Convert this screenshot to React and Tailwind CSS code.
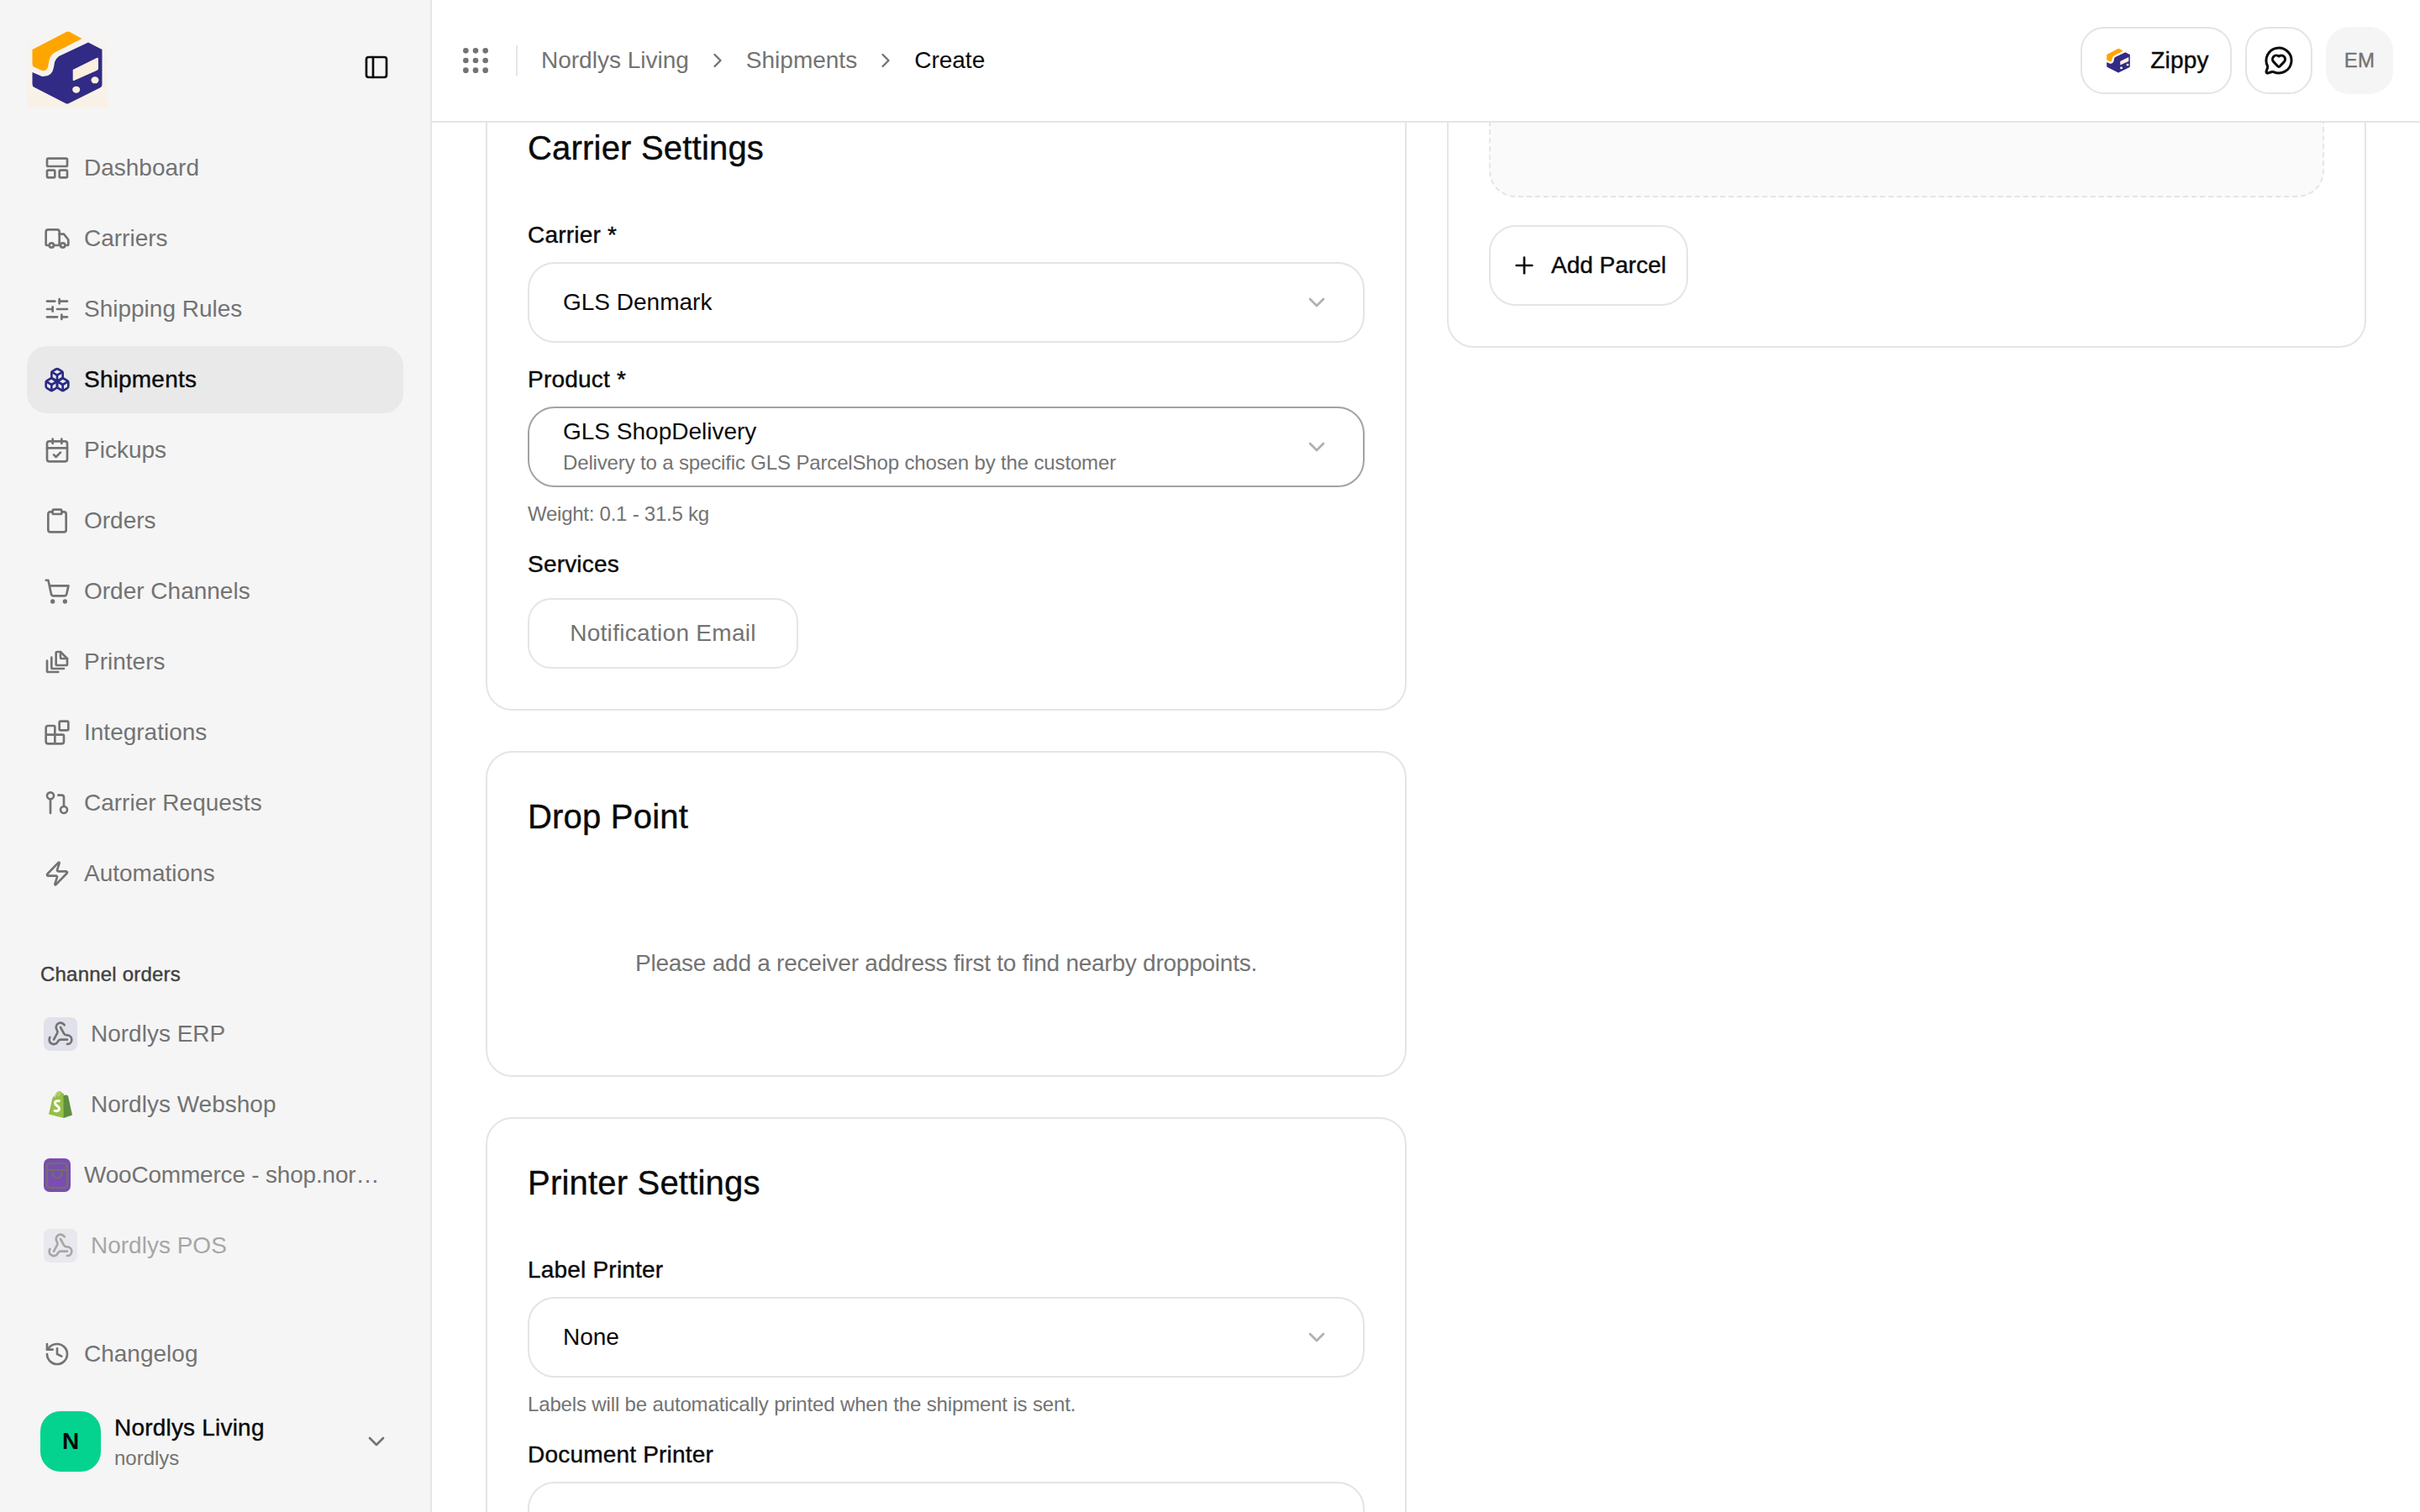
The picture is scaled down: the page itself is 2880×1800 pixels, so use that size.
import {
  Blocks,
  Boxes,
  CalendarCheck,
  ChevronDown,
  ChevronRight,
  Clipboard,
  Grip,
  History,
  MessageCircleHeart,
  PanelLeft,
  Plus,
  ShoppingCart,
  SlidersHorizontal,
  Truck,
  Webhook,
  Zap,
} from 'lucide-react'

const medium = '[-webkit-text-stroke:0.4px] tracking-[0.2px]'

const DashboardIcon = ({ className }) => (
  <svg className={className} viewBox="0 0 24 24" fill="none" stroke="currentColor" strokeWidth="2" strokeLinejoin="round">
    <rect x="3" y="3.5" width="18" height="7" rx="1" />
    <rect x="3" y="14" width="7" height="6.5" rx="1" />
    <rect x="14" y="14" width="7" height="6.5" rx="1" />
  </svg>
)

const PagesIcon = ({ className }) => (
  <svg className={className} viewBox="0 0 24 24" fill="none" stroke="currentColor" strokeWidth="2" strokeLinecap="round" strokeLinejoin="round">
    <path d="M15 3h-3a1 1 0 0 0-1 1v10a1 1 0 0 0 1 1h8a1 1 0 0 0 1-1V9z" />
    <path d="M15 3v5a1 1 0 0 0 1 1h5" />
    <path d="M7 8v9a1 1 0 0 0 1 1h10" />
    <path d="M3 11v9a1 1 0 0 0 1 1h9" />
  </svg>
)

const RequestIcon = ({ className }) => (
  <svg className={className} viewBox="0 0 24 24" fill="none" stroke="currentColor" strokeWidth="2" strokeLinecap="round" strokeLinejoin="round">
    <circle cx="6" cy="5.5" r="3" />
    <path d="M6 8.500V21" />
    <path d="M13 5h3a2 2 0 0 1 2 2v8" />
    <circle cx="18" cy="18" r="3" />
  </svg>
)

const Logo = ({ className }) => (
  <svg className={className} viewBox="12 12 96 96">
    <defs>
      <linearGradient id="logoGlow" x1="0" y1="0" x2="0" y2="1">
        <stop offset="0" stopColor="#f5f5f5" />
        <stop offset="1" stopColor="#f9f1e5" />
      </linearGradient>
    </defs>
    <rect x="12" y="12" width="96" height="96" fill="url(#logoGlow)" />
    <path d="M18.500 39L59 18Q61 17 63 18L77.500 26L46 42Q40 45 38.500 52L37 60Q35 65 30 64L21 60Q18.500 59 18.500 56Z" fill="#ffa500" />
    <path d="M18.500 66L30 71Q42 72 44 60L45 54Q46 50 50 47L85 30.500L101.500 39V81Q101.500 83 99 84.500L62 103Q60 104 58 103L21 84Q18.500 83 18.500 80Z" fill="#312b85" />
    <path d="M66.700 63L95 49Q97 48 97 50V62Q97 63 95 64L68 76Q66.700 76.500 66.700 75Z" fill="#f9f0e0" />
    <ellipse cx="70.700" cy="86.700" rx="4.500" ry="4" fill="#f9f0e0" />
    <ellipse cx="93" cy="75.300" rx="4.500" ry="4" fill="#f9f0e0" />
  </svg>
)

const ShopifyIcon = () => (
  <svg className="w-7 h-8" viewBox="0 0 28 32" fill="none">
    <path d="M0 27.500L4.500 8Q5 6.500 7 6Q9 0.500 12.500 0Q15 0 16.500 2.500L18 3L18 32Z" fill="#95bf47" />
    <path d="M17.700 32L28 28.500L23 5.500L21 4.500L17.500 5Z" fill="#5e8e3e" />
    <path d="M13.500 12c-2.500-1.200-6-.5-6 2.300 0 3.200 5 3 5 6.500 0 3-3.500 3.700-6.500 2" stroke="#fff" strokeWidth="3" />
    <path d="M7.500 7.500c1-3.500 3-6 5-6M11.500 6c.5-2 1.500-3.500 3-4" stroke="#e8f2d0" strokeWidth="0.800" />
  </svg>
)

const WooIcon = () => (
  <svg className="w-8 h-10 shrink-0" viewBox="0 0 32 40" fill="none">
    <rect width="32" height="40" rx="7" fill="#7c4bb4" />
    <rect x="4" y="6" width="24" height="29" rx="3.500" stroke="#6f6f6f" strokeWidth="2.600" />
    <path d="M4 14h24" stroke="#6f6f6f" strokeWidth="2.600" />
    <path d="M10.500 17v1a5.500 5.500 0 0 0 11 0v-1" stroke="#6f6f6f" strokeWidth="2.600" strokeLinecap="round" />
  </svg>
)

const navItems = [
  { label: 'Dashboard', icon: DashboardIcon },
  { label: 'Carriers', icon: Truck },
  { label: 'Shipping Rules', icon: SlidersHorizontal },
  { label: 'Shipments', icon: Boxes, active: true },
  { label: 'Pickups', icon: CalendarCheck },
  { label: 'Orders', icon: Clipboard },
  { label: 'Order Channels', icon: ShoppingCart },
  { label: 'Printers', icon: PagesIcon },
  { label: 'Integrations', icon: Blocks },
  { label: 'Carrier Requests', icon: RequestIcon },
  { label: 'Automations', icon: Zap },
]

const WebhookTile = () => (
  <div className="w-10 h-10 shrink-0 rounded-lg bg-[#e0e1ea] flex items-center justify-center">
    <Webhook className="size-8 text-[#737373]" strokeWidth={2} />
  </div>
)

const Sidebar = () => (
  <aside className="w-[514px] h-screen shrink-0 flex flex-col px-8 bg-[#f5f5f5] border-r-2 border-[#e5e5e5] text-[28px] text-[#737373]">
    <div className="mt-8 h-24 flex items-center justify-between pr-4">
      <Logo className="size-24" />
      <PanelLeft className="size-8 text-[#0a0a0a]" />
    </div>

    <nav className="mt-8 flex flex-col gap-1">
      {navItems.map((item) => (
        <div
          key={item.label}
          className={`h-20 rounded-3xl px-5 flex items-center gap-4 ${item.active ? `bg-[#e9e9e9] text-[#0a0a0a] ${medium}` : ''}`}
        >
          <item.icon className={`size-8 shrink-0 ${item.active ? 'text-[#2a2a85]' : ''}`} />
          <span>{item.label}</span>
        </div>
      ))}
    </nav>

    <div className={`mt-16 px-4 text-2xl leading-8 text-[#404040] ${medium}`}>Channel orders</div>
    <div className="mt-[15px] flex flex-col gap-1">
      <div className="h-20 px-5 flex items-center gap-4">
        <WebhookTile />
        <span>Nordlys ERP</span>
      </div>
      <div className="h-20 px-5 flex items-center gap-4">
        <div className="w-10 flex justify-center shrink-0">
          <ShopifyIcon />
        </div>
        <span>Nordlys Webshop</span>
      </div>
      <div className="h-20 px-5 flex items-center gap-4">
        <WooIcon />
        <span className="truncate tracking-[-0.2px]">WooCommerce - shop.nordlys.dk</span>
      </div>
      <div className="h-20 px-5 flex items-center gap-4 opacity-60">
        <WebhookTile />
        <span>Nordlys POS</span>
      </div>
    </div>

    <div className="mt-auto pb-12">
      <div className="h-20 px-5 flex items-center gap-4">
        <History className="size-8 shrink-0" />
        <span>Changelog</span>
      </div>
      <div className="mt-7 px-4 flex items-center">
        <div className="size-[72px] rounded-3xl bg-[#03d38f] flex items-center justify-center text-[#0a0a0a] font-bold">N</div>
        <div className="ml-4 flex-1">
          <div className={`leading-10 text-[#0a0a0a] ${medium}`}>Nordlys Living</div>
          <div className="text-2xl leading-8">nordlys</div>
        </div>
        <ChevronDown className="size-8" />
      </div>
    </div>
  </aside>
)

const Header = () => (
  <header className="h-[146px] shrink-0 pl-8 pr-8 flex items-center justify-between bg-white border-b-2 border-[#e5e5e5] text-[28px]">
    <div className="flex items-center gap-7">
      <Grip className="size-10 text-[#737373]" />
      <div className="w-0.5 h-9 bg-[#e5e5e5]" />
      <div className="flex items-center gap-5 text-[#737373]">
        <span>Nordlys Living</span>
        <ChevronRight className="size-7" />
        <span>Shipments</span>
        <ChevronRight className="size-7" />
        <span className="text-[#0a0a0a]">Create</span>
      </div>
    </div>
    <div className="flex items-center gap-4">
      <div className={`h-20 w-[180px] pl-[2px] rounded-[28px] border-2 border-[#e4e4e7] flex items-center justify-center gap-[22px] text-[#0a0a0a] ${medium}`}>
        <Logo className="size-8 shrink-0 [&>rect]:hidden" />
        <span>Zippy</span>
      </div>
      <div className="size-20 rounded-[28px] border-2 border-[#e4e4e7] flex items-center justify-center">
        <MessageCircleHeart className="size-9 text-[#0a0a0a]" />
      </div>
      <div className={`size-20 rounded-[28px] bg-[#f5f5f5] flex items-center justify-center text-2xl text-[#737373] ${medium}`}>EM</div>
    </div>
  </header>
)

const Card = ({ title, children }) => (
  <section className="rounded-[32px] border-2 border-[#e5e5e5] p-12 bg-white">
    <h2 className={`text-[40px] leading-14 text-[#0a0a0a] ${medium}`}>{title}</h2>
    {children}
  </section>
)

const Label = ({ children, className }) => (
  <div className={`text-[28px] leading-10 text-[#0a0a0a] ${medium} ${className}`}>{children}</div>
)

const Select = ({ value, hint, focused }) => (
  <div className={`mt-3 h-24 rounded-[32px] border-2 pl-10 pr-[39px] flex items-center justify-between ${focused ? 'border-[#a3a3a3]' : 'border-[#e4e4e7]'}`}>
    <div>
      <div className="text-[28px] leading-[34px] text-[#0a0a0a]">{value}</div>
      {hint && <div className="mt-1 text-2xl leading-8 tracking-[-0.15px] text-[#737373]">{hint}</div>}
    </div>
    <ChevronDown className="size-8 text-[#b0b0b0]" />
  </div>
)

const Content = () => (
  <div className="flex-1 min-h-0 overflow-hidden px-16 grid grid-cols-[1096px_1fr] gap-12 items-start">
    <div className="-mt-12 flex flex-col gap-12">
      <Card title="Carrier Settings">
        <Label className="mt-14">Carrier *</Label>
        <Select value="GLS Denmark" />
        <Label className="mt-6">Product *</Label>
        <Select value="GLS ShopDelivery" hint="Delivery to a specific GLS ParcelShop chosen by the customer" focused />
        <div className="mt-4 text-2xl leading-8 tracking-[-0.25px] text-[#737373]">Weight: 0.1 - 31.5 kg</div>
        <Label className="mt-6">Services</Label>
        <div className="mt-5 w-[322px] h-[84px] rounded-[28px] border-2 border-[#e5e5e5] flex items-center justify-center text-[28px] tracking-[0.3px] text-[#737373]">
          Notification Email
        </div>
      </Card>

      <Card title="Drop Point">
        <p className="pt-[127px] pb-[65px] text-center text-[28px] leading-10 tracking-[-0.24px] text-[#737373]">
          Please add a receiver address first to find nearby droppoints.
        </p>
      </Card>

      <Card title="Printer Settings">
        <Label className="mt-14">Label Printer</Label>
        <Select value="None" />
        <div className="mt-4 text-2xl leading-8 tracking-[-0.15px] text-[#737373]">Labels will be automatically printed when the shipment is sent.</div>
        <Label className="mt-6">Document Printer</Label>
        <Select />
      </Card>
    </div>

    <section className="-mt-[300px] rounded-[32px] border-2 border-[#e5e5e5] p-12 bg-white">
      <div className="h-[339px] rounded-[32px] border-2 border-dashed border-[#e5e5e5] bg-[#fafafa]" />
      <div className="mt-[33px] w-fit h-24 px-6 rounded-[32px] border-2 border-[#e5e5e5] flex items-center gap-4 text-[28px] text-[#0a0a0a] [-webkit-text-stroke:0.4px]">
        <Plus className="size-8" />
        <span>Add Parcel</span>
      </div>
    </section>
  </div>
)

const App = () => (
  <div className="flex h-screen overflow-hidden bg-white font-['Liberation_Sans',sans-serif]">
    <Sidebar />
    <main className="flex-1 min-w-0 h-screen flex flex-col">
      <Header />
      <Content />
    </main>
  </div>
)

export default App
